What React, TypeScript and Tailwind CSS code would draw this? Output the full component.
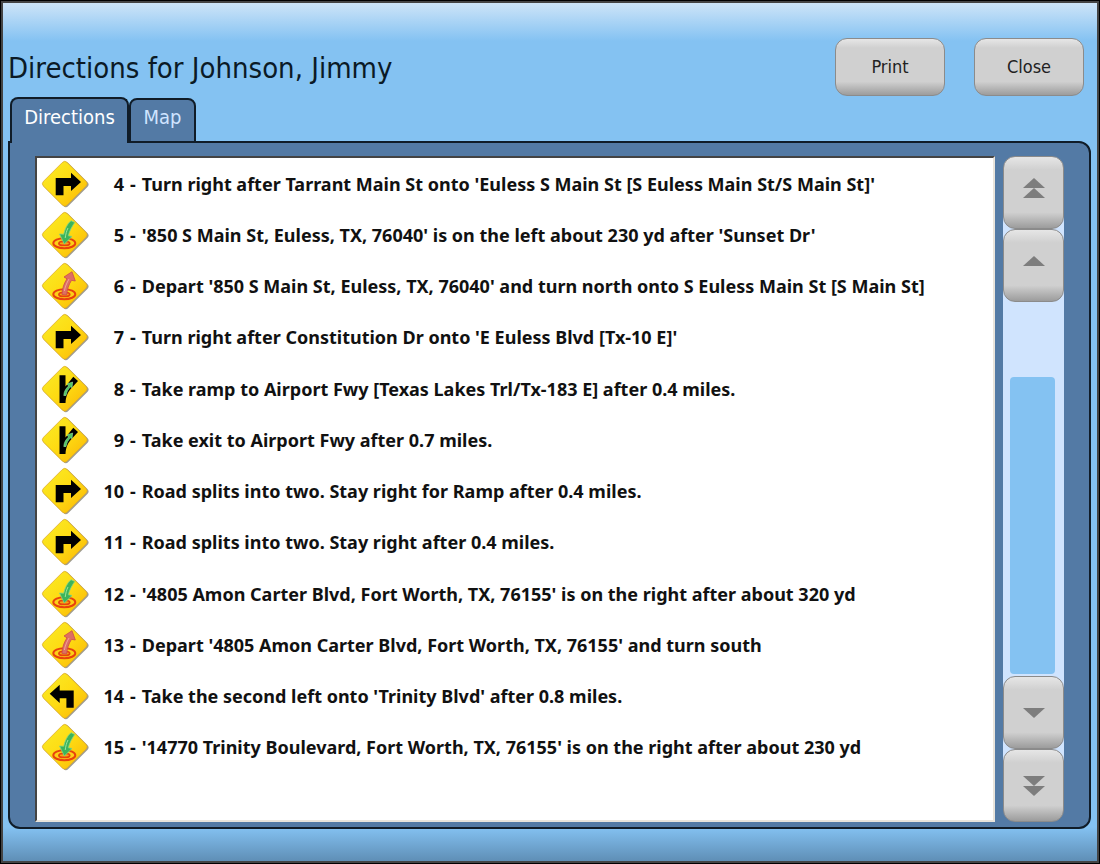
import React, { useState } from 'react';
type Maneuver = 'right' | 'left' | 'ramp' | 'arrive' | 'depart';
interface Step {
  id: number;
  icon: Maneuver;
  text: string;
}
const steps: Step[] = [
  { id: 4, icon: 'right', text: "Turn right after Tarrant Main St onto 'Euless S Main St [S Euless Main St/S Main St]'" },
  { id: 5, icon: 'arrive', text: "'850 S Main St, Euless, TX, 76040' is on the left about 230 yd after 'Sunset Dr'" },
  { id: 6, icon: 'depart', text: "Depart '850 S Main St, Euless, TX, 76040' and turn north onto S Euless Main St [S Main St]" },
  { id: 7, icon: 'right', text: "Turn right after Constitution Dr onto 'E Euless Blvd [Tx-10 E]'" },
  { id: 8, icon: 'ramp', text: 'Take ramp to Airport Fwy [Texas Lakes Trl/Tx-183 E] after 0.4 miles.' },
  { id: 9, icon: 'ramp', text: 'Take exit to Airport Fwy after 0.7 miles.' },
  { id: 10, icon: 'right', text: 'Road splits into two. Stay right for Ramp after 0.4 miles.' },
  { id: 11, icon: 'right', text: 'Road splits into two. Stay right after 0.4 miles.' },
  { id: 12, icon: 'arrive', text: "'4805 Amon Carter Blvd, Fort Worth, TX, 76155' is on the right after about 320 yd" },
  { id: 13, icon: 'depart', text: "Depart '4805 Amon Carter Blvd, Fort Worth, TX, 76155' and turn south" },
  { id: 14, icon: 'left', text: "Take the second left onto 'Trinity Blvd' after 0.8 miles." },
  { id: 15, icon: 'arrive', text: "'14770 Trinity Boulevard, Fort Worth, TX, 76155' is on the right after about 230 yd" }
];
const Target = () => <g>
    <ellipse cx="24.3" cy="33.2" rx="11" ry="5" fill="#fbd018" stroke="#e8420d" strokeWidth="2" />
    <ellipse cx="24.3" cy="33.4" rx="5.4" ry="2" fill="#f6a414" stroke="#e8420d" strokeWidth="1.8" />
  </g>;
const SignIcon = ({ type }: { type: Maneuver }) => {
  return <svg viewBox="0 0 50 50" className="size-[50px] shrink-0" aria-hidden="true">
      <defs>
        <linearGradient id={`sign-${type}`} x1="0" y1="0.3" x2="1" y2="0.3">
          <stop offset="0" stopColor="#fbe41e" />
          <stop offset="0.5" stopColor="#fedb12" />
          <stop offset="1" stopColor="#fcc60c" />
        </linearGradient>
      </defs>
      <rect x="8.2" y="8.2" width="34" height="34" rx="3.5" transform="rotate(45 25.4 25.4) translate(0.6 0)" fill="#5f5a48" opacity="0.6" />
      <rect x="8" y="8" width="33.5" height="33.5" rx="3.5" transform="rotate(45 24.75 24.75)" fill={`url(#sign-${type})`} stroke="#dba92c" strokeWidth="0.7" />
      {type === 'right' && <path d="M15.7 36.3V19H31V13.7L41 23L31 32V27H23.5V36.3Z" fill="#000" />}
      {type === 'left' && <path d="M33.7 36.7V19.4H19.7V13.7L9.7 22.7L19.7 32V27.3H26.4V36.7Z" fill="#000" />}
      {type === 'ramp' && <g>
          <path d="M19.5 11.3H25.5V22.5L33.3 12.7L38 17L31.5 24C28 28 26 31.5 25.5 39H19.5Z" fill="#000" />
          <path d="M23.8 31.5C24 27.5 25.8 24.5 28.6 22L27 20L32.6 18L32 23.6L30.6 22.8C28.2 25 26.4 28 26 31.5Z" fill="#4fc566" stroke="#a5eba6" strokeWidth="0.6" />
        </g>}
      {type === 'arrive' && <g>
          <Target />
          <path d="M31 10.7L34.7 12.5C32 16.5 29.5 20.5 28.3 25.8L32 26.5L24.3 34L19.5 24L23.7 24.3C25 18.500 27.500 13.500 31 10.7Z" fill="#3cb45a" stroke="#7ed487" strokeWidth="0.8" />
          <path d="M28 18C26.500 21 25.800 24 25.2 28" fill="none" stroke="#9ce6a0" strokeWidth="1" />
        </g>}
      {type === 'depart' && <g>
          <Target />
          <path d="M22 33.5C22.300 27 24 22.500 27 17.8L24 16L32 10.7L35.3 20L31.5 19.3C28.500 24 27.300 28 26.6 34Z" fill="#dd6f62" stroke="#cc4a4c" strokeWidth="0.8" />
          <path d="M24.4 30C25 26 26.7 22 29 18" fill="none" stroke="#f0a298" strokeWidth="1" />
        </g>}
    </svg>;
};
const ActionButton = ({ label }: { label: string }) => {
  return <button type="button" className="h-[58px] w-[110px] rounded-xl border border-[#8b8b8b] bg-[linear-gradient(#e6e6e6,#d0d0d0_16%,#d0d0d0_76%,#9c9c9c)] text-lg text-[#222]">
      {label}
    </button>;
};
const ScrollButton = ({ label, paths }: { label: string; paths: string[] }) => {
  return <button type="button" aria-label={label} className="flex h-[73px] w-full items-center justify-center rounded-xl border border-[#8b8b8b] bg-[linear-gradient(#e6e6e6,#d0d0d0_18%,#d0d0d0_78%,#9c9c9c)]">
      <svg viewBox="0 0 24 32" className="h-8 w-6" fill="#7d7d7d" aria-hidden="true">
        {paths.map(d => <path key={d} d={d} />)}
      </svg>
    </button>;
};
const App = () => {
  const [tab, setTab] = useState('directions');
  return <div className="flex min-h-screen flex-col border border-black bg-[#444] p-0.5 font-['DejaVu_Sans_Condensed','Noto_Sans',sans-serif]">
      <div className="flex flex-1 flex-col bg-[#84c2f2] bg-[linear-gradient(#cde4f8,#84c2f2_38px,#84c2f2_calc(100%-34px),#5f8fb6)] pb-8 pl-[5px] pr-[6px]">
        <header className="flex h-[94px] items-center justify-between pr-[7px] pt-[34px]">
          <h1 className="pt-0.5 text-[29px] leading-10 text-[#0b1a26]">Directions for Johnson, Jimmy</h1>
          <div className="flex gap-[29px]">
            <ActionButton label="Print" />
            <ActionButton label="Close" />
          </div>
        </header>
        <div role="tablist" className="z-10 -mb-0.5 flex items-end pl-0.5">
          <button type="button" role="tab" aria-selected={tab === 'directions'} onClick={() => setTab('directions')} className="h-[46px] w-[119px] rounded-t-lg border-2 border-b-0 border-[#101c28] bg-[#537aa5] pb-2 text-xl text-white">
            Directions
          </button>
          <button type="button" role="tab" aria-selected={tab === 'map'} onClick={() => setTab('map')} className="h-[45px] w-[67px] rounded-t-lg border-2 border-[#101c28] bg-[#537aa5] pb-2 text-xl text-[#cfe4ff]">
            Map
          </button>
        </div>
        <main className="flex flex-1 gap-2 rounded-xl rounded-tl-none border-2 border-[#101c28] bg-[#537aa5] pb-[5px] pl-[25px] pr-[25px] pt-[13px]">
          <ol className="grid flex-1 auto-rows-fr border-2 border-b-[#e8e4dc] border-l-[#444] border-r-[#e8e4dc] border-t-[#444] bg-white pb-[47px] pl-[3px]">
            {steps.map(step => <li key={step.id} className="flex min-h-0 items-center font-['Noto_Sans',sans-serif] text-lg font-bold leading-6 text-[#111]">
                <SignIcon type={step.icon} />
                <span className="w-[34px] text-right">{step.id}</span>
                <span className="px-1.5">-</span>
                <span>{step.text}</span>
              </li>)}
          </ol>
          <div className="flex w-[61px] flex-col bg-[linear-gradient(transparent_30px,#d0e4fe_30px,#d0e4fe_calc(100%-30px),transparent_calc(100%-30px))]">
            <ScrollButton label="Page up" paths={['M12 1L23 11H1Z', 'M12 11L23 21H1Z']} />
            <ScrollButton label="Line up" paths={['M12 6L23 16H1Z']} />
            <div className="flex flex-1 flex-col pb-0.5 pl-[7px] pr-[9px] pt-[75px]">
              <div className="flex-1 rounded bg-[#84c2f2]" />
            </div>
            <ScrollButton label="Line down" paths={['M12 21L23 11H1Z']} />
            <ScrollButton label="Page down" paths={['M12 16L23 6H1Z', 'M12 26L23 16H1Z']} />
          </div>
        </main>
      </div>
    </div>;
};
export default App;
